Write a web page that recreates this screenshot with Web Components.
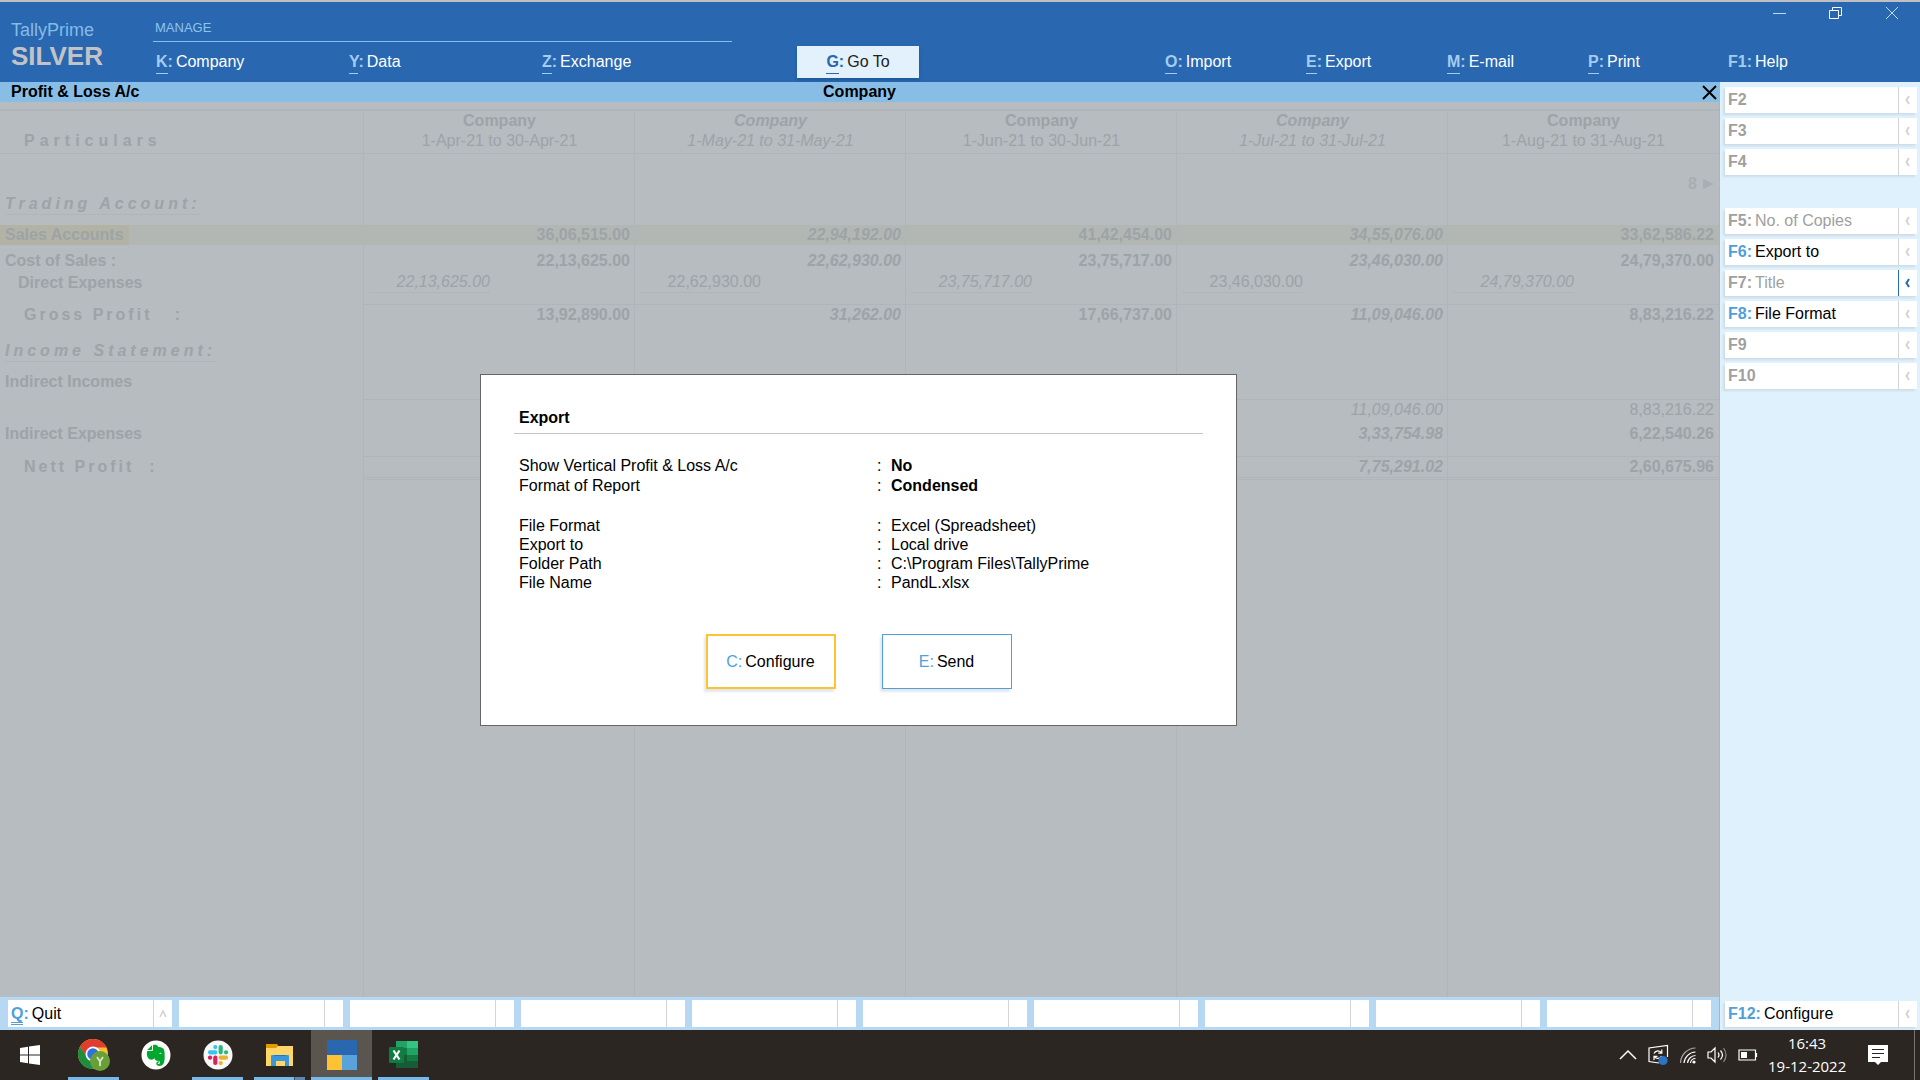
<!DOCTYPE html>
<html lang="en">
<head>
<meta charset="utf-8">
<title>TallyPrime - Profit &amp; Loss A/c</title>
<style>
  html, body { height: 100%; }
  body {
    margin: 0;
    font: 16px/20px "Liberation Sans", Arial, sans-serif;
    color: #000;
    background: #b6bcc0;
  }
</style>
</head>
<body>
<tally-app></tally-app>

<script>
  const BASE_STYLE = `
    *, *::before, *::after { box-sizing: border-box; }
    button { font: inherit; color: inherit; background: none; border: 0; padding: 0; margin: 0; text-align: left; }
    svg { display: block; }
  `;

  class BaseElement extends HTMLElement {
    constructor() {
      super();
      this.attachShadow({ mode: 'open' });
    }

    connectedCallback() {
      this.shadowRoot.innerHTML = `<style>${BASE_STYLE}${this.styles()}</style>${this.markup()}`;
    }

    attr(name) {
      return this.getAttribute(name) || '';
    }
  }

  /* ---------- Top menu ---------- */

  class MenuKey extends BaseElement {
    styles() {
      return `
        :host { display: block; --key: #a3cdf0; color: #fff; }
        :host([raised]) { --key: #2967b1; color: #222; background: #e2f1fc; box-shadow: 0 2px 3px #1d559a; }
        button { display: block; width: 100%; height: 32px; line-height: 30px; white-space: nowrap; }
        :host([raised]) button { text-align: center; }
        b { color: var(--key); margin-right: 3px; }
        u { text-decoration: none; padding-bottom: 3px; border-bottom: 1px solid var(--key); }
        :host([plain]) u { border: 0; }
      `;
    }

    markup() {
      return `<button type="button"><b><u>${this.attr('key')}</u>:</b><slot></slot></button>`;
    }
  }
  customElements.define('menu-key', MenuKey);

  class TallyHeader extends BaseElement {
    styles() {
      return `
        :host { display: grid; grid-template-columns: 1fr 201px; height: 82px; background: #2967b1; border-top: 2px solid #c0c0c4; }
        .main { display: grid; grid-template-columns: 797fr 122px 800fr; align-items: end; padding-bottom: 4px; }
        .left { display: grid; grid-template-columns: 153px minmax(0, 579px); align-items: end; }
        .brand { padding: 0 0 6px 11px; }
        .brand span { display: block; font-size: 18px; line-height: 20px; color: #85bbe6; }
        .brand strong { display: block; font-size: 26px; line-height: 32px; color: #c3c3c6; }
        .manage h2 { margin: 0 0 4px; padding: 0 0 3px 2px; font-size: 13px; line-height: 20px; font-weight: 400; color: #8fc4ee; border-bottom: 1px solid #88bde6; }
        nav { display: grid; grid-template-columns: repeat(3, 1fr); }
        nav menu-key { padding-left: 3px; }
        .right { grid-template-columns: repeat(4, 141px); justify-content: end; }
        .right menu-key { padding-left: 10px; }
        .side { display: flex; flex-direction: column; justify-content: space-between; padding-bottom: 4px; }
        .side menu-key { padding-left: 9px; }
        .window { display: flex; justify-content: flex-end; gap: 34px; padding-right: 17px; }
        .window button { width: 22px; height: 22px; display: grid; place-items: center; color: #c0dcf5; }
      `;
    }

    markup() {
      return `
        <div class="main">
          <div class="left">
            <div class="brand"><span>TallyPrime</span><strong>SILVER</strong></div>
            <div class="manage">
              <h2>MANAGE</h2>
              <nav aria-label="Manage">
                <menu-key key="K">Company</menu-key>
                <menu-key key="Y">Data</menu-key>
                <menu-key key="Z">Exchange</menu-key>
              </nav>
            </div>
          </div>
          <menu-key key="G" raised>Go To</menu-key>
          <nav class="right" aria-label="Share">
            <menu-key key="O">Import</menu-key>
            <menu-key key="E">Export</menu-key>
            <menu-key key="M">E-mail</menu-key>
            <menu-key key="P">Print</menu-key>
          </nav>
        </div>
        <div class="side">
          <div class="window">
            <button type="button" aria-label="Minimise"><svg width="14" height="14" stroke="currentColor"><path d="M0 7.500h13"/></svg></button>
            <button type="button" aria-label="Restore"><svg width="14" height="14" fill="none" stroke="#fff"><path d="M.5 4.500h9v8h-9zM3.500 4V1.500h9v8H10"/></svg></button>
            <button type="button" aria-label="Close"><svg width="14" height="14" stroke="currentColor"><path d="M1 1l12 12M13 1L1 13"/></svg></button>
          </div>
          <menu-key key="F1" plain>Help</menu-key>
        </div>
      `;
    }
  }
  customElements.define('tally-header', TallyHeader);

  /* ---------- Report ---------- */

  const COLUMNS = [
    '1-Apr-21 to 30-Apr-21',
    '1-May-21 to 31-May-21',
    '1-Jun-21 to 30-Jun-21',
    '1-Jul-21 to 31-Jul-21',
    '1-Aug-21 to 31-Aug-21'
  ];

  const MORE_ARROW = '<svg width="11" height="10" fill="currentColor"><path d="M0 0l11 5-11 5z"/></svg>';

  // kind: row class, h: row height, values: one per column
  const ROWS = [
    { kind: 'pager', h: 40, values: ['', '', '', '', `8${MORE_ARROW}`] },
    { kind: 'section', h: 21, name: 'Trading Account:' },
    { kind: 'gap', h: 10 },
    { kind: 'total current', h: 20, name: 'Sales Accounts', values: ['36,06,515.00', '22,94,192.00', '41,42,454.00', '34,55,076.00', '33,62,586.22'] },
    { kind: 'total', h: 26, name: 'Cost of Sales :', values: ['22,13,625.00', '22,62,930.00', '23,75,717.00', '23,46,030.00', '24,79,370.00'] },
    { kind: 'sub', h: 22, name: 'Direct Expenses', values: ['22,13,625.00', '22,62,930.00', '23,75,717.00', '23,46,030.00', '24,79,370.00'] },
    { kind: 'gap', h: 11 },
    { kind: 'total result ruled', h: 21, name: 'Gross Profit &nbsp;&nbsp;:', values: ['13,92,890.00', '31,262.00', '17,66,737.00', '11,09,046.00', '8,83,216.22'] },
    { kind: 'section', h: 37, name: 'Income Statement:' },
    { kind: 'total', h: 30, name: 'Indirect Incomes' },
    { kind: 'gap', h: 7 },
    { kind: 'ruled', h: 21, values: ['', '', '', '11,09,046.00', '8,83,216.22'] },
    { kind: 'total', h: 24, name: 'Indirect Expenses', values: ['', '', '', '3,33,754.98', '6,22,540.26'] },
    { kind: 'gap', h: 12 },
    { kind: 'total result ruled', h: 21, name: 'Nett Profit &nbsp;:', values: ['', '', '', '7,75,291.02', '2,60,675.96'] },
    { kind: 'double', h: 3 }
  ];

  class TallyReport extends BaseElement {
    styles() {
      return `
        :host { display: flex; flex-direction: column; min-width: 0; }
        .title { display: grid; grid-template-columns: 1fr auto 1fr; height: 20px; line-height: 19px; background: #88bde6; font-weight: 700; }
        .title h1 { margin: 0; padding-left: 11px; font-size: 16px; line-height: 19px; }
        .title button { justify-self: end; align-self: center; padding: 1px 2px 0 0; }
        .body { position: relative; flex: 1; padding-top: 7px; color: #9da3a7; --line: #afb5b9; }
        table { width: 100%; height: 100%; table-layout: fixed; border-collapse: separate; border-spacing: 0; }
        col:first-child { width: 364px; }
        th, td { padding: 0 4px; text-align: right; vertical-align: bottom; font-weight: 400; white-space: nowrap; border-right: 1px solid var(--line); }
        tr > :last-child { padding-right: 5px; border-right: 0; }
        th { padding-left: 5px; text-align: left; }
        thead th { height: 45px; padding-bottom: 2px; border-top: 2px solid var(--line); border-bottom: 1px solid var(--line); text-align: center; }
        thead th:first-child { padding-left: 24px; text-align: left; font-weight: 700; letter-spacing: 5px; }
        thead strong { display: block; }
        thead th:nth-child(odd) { font-style: italic; }
        thead th:first-child { font-style: normal; }
        .total th, .total td, .pager td { font-weight: 700; }
        .total td:nth-child(odd), .ruled td:nth-child(odd) { font-style: italic; }
        .pager td { color: #a8aeb2; }
        .pager svg { display: inline-block; margin-left: 6px; }
        .section span { display: inline-block; vertical-align: bottom; font-weight: 700; font-style: italic; letter-spacing: 4px; border-bottom: 1px solid var(--line); }
        .current { background: #b3b7b3; }
        .current th span { display: inline-block; margin-left: -5px; padding: 0 5px; background: #b2b3a5; vertical-align: bottom; }
        .sub th { padding-left: 18px; font-weight: 700; }
        .sub td { padding-left: 5px; text-align: left; }
        .sub td span { display: inline-block; width: 121px; text-align: right; border-bottom: 1px solid var(--line); vertical-align: bottom; }
        .sub td:nth-child(even) { font-style: italic; }
        .result th { padding-left: 24px; letter-spacing: 3px; }
        .ruled td { border-top: 1px solid var(--line); }
        .double td { border-top: 1px solid var(--line); border-bottom: 1px solid var(--line); }
        .overlay { position: absolute; inset: 0; display: grid; place-items: center; padding-right: 2px; color: #000; }
      `;
    }

    row(row) {
      const values = row.values || COLUMNS.map(() => '');
      const name = row.name ? `<span>${row.name}</span>` : '';
      return `
        <tr class="${row.kind}" style="height:${row.h}px">
          <th scope="row">${name}</th>
          ${values.map(v => `<td>${v ? `<span>${v}</span>` : ''}</td>`).join('')}
        </tr>`;
    }

    markup() {
      return `
        <div class="title">
          <h1>Profit &amp; Loss A/c</h1>
          <span>Company</span>
          <button type="button" aria-label="Close report"><svg width="15" height="15" stroke="#000" stroke-width="2"><path d="M1 1l13 13M14 1L1 14"/></svg></button>
        </div>
        <div class="body">
          <table>
            <colgroup><col>${COLUMNS.map(() => '<col>').join('')}</colgroup>
            <thead>
              <tr>
                <th scope="col">Particulars</th>
                ${COLUMNS.map(c => `<th scope="col"><strong>Company</strong>${c}</th>`).join('')}
              </tr>
            </thead>
            <tbody>
              ${ROWS.map(r => this.row(r)).join('')}
              <tr class="fill"><th></th>${COLUMNS.map(() => '<td></td>').join('')}</tr>
            </tbody>
          </table>
          <div class="overlay"><slot></slot></div>
        </div>
      `;
    }
  }
  customElements.define('tally-report', TallyReport);

  /* ---------- Export dialog ---------- */

  class DialogField extends BaseElement {
    styles() {
      return `
        :host { display: grid; grid-template-columns: 358px 14px 1fr; padding-left: 5px; line-height: 19px; }
        :host([strong]) { line-height: 20px; }
        :host([strong]) slot { font-weight: 700; }
      `;
    }

    markup() {
      return `<span>${this.attr('label')}</span><span>:</span><slot></slot>`;
    }
  }
  customElements.define('dialog-field', DialogField);

  class DialogButton extends BaseElement {
    styles() {
      return `
        :host { display: block; }
        button { width: 130px; height: 55px; padding-top: 1px; text-align: center; background: #fff; border: 1px solid #4f9fda; box-shadow: -2px 3px 2px #e4e8ec; }
        :host([selected]) button { border: 2px solid #ffc233; }
        span { color: #4f9fda; margin-right: 3px; }
      `;
    }

    markup() {
      return `<button type="button"><span>${this.attr('key')}:</span><slot></slot></button>`;
    }
  }
  customElements.define('dialog-button', DialogButton);

  class ExportDialog extends BaseElement {
    styles() {
      return `
        :host { display: block; width: 757px; padding: 33px 33px 36px; background: #fff; border: 1px solid #666; }
        h2 { margin: 0 0 22px; padding: 0 0 5px 5px; font-size: 16px; line-height: 20px; border-bottom: 1px solid #c4c4c4; }
        .group { margin-bottom: 20px; }
        .actions { display: flex; justify-content: center; gap: 46px; margin-top: 42px; }
      `;
    }

    markup() {
      return `
        <section role="dialog" aria-labelledby="title">
          <h2 id="title">Export</h2>
          <div class="group">
            <dialog-field label="Show Vertical Profit &amp;amp; Loss A/c" strong>No</dialog-field>
            <dialog-field label="Format of Report" strong>Condensed</dialog-field>
          </div>
          <dialog-field label="File Format">Excel (Spreadsheet)</dialog-field>
          <dialog-field label="Export to">Local drive</dialog-field>
          <dialog-field label="Folder Path">C:\\Program Files\\TallyPrime</dialog-field>
          <dialog-field label="File Name">PandL.xlsx</dialog-field>
          <div class="actions">
            <dialog-button key="C" selected>Configure</dialog-button>
            <dialog-button key="E">Send</dialog-button>
          </div>
        </section>
      `;
    }
  }
  customElements.define('export-dialog', ExportDialog);

  /* ---------- Side and bottom button bars ---------- */

  class SideButton extends BaseElement {
    styles() {
      return `
        :host { display: block; color: #a0a0a0; --key: #a0a0a0; --mark: #d4d4d4; }
        :host([active]) { color: #000; --key: #4f9fda; }
        :host([more]) { --mark: #2967b1; }
        button { display: grid; grid-template-columns: 1fr 19px; width: 100%; height: 26px; line-height: 25px; background: #fff; box-shadow: -2px 2px 2px #cddde8; }
        .text { padding-left: 3px; white-space: nowrap; }
        b { color: var(--key); margin-right: 3px; }
        i { display: grid; place-items: center; border-left: 1px solid var(--mark); color: var(--mark); }
      `;
    }

    markup() {
      const colon = this.textContent.trim() ? ':' : '';
      return `
        <button type="button">
          <span class="text"><b>${this.attr('key')}${colon}</b><slot></slot></span>
          <i><svg width="6" height="10" fill="none" stroke="currentColor" stroke-width="2"><path d="M4 1L1.500 5 4 9"/></svg></i>
        </button>`;
    }
  }
  customElements.define('side-button', SideButton);

  class SideBar extends BaseElement {
    styles() {
      return `
        :host { display: flex; flex-direction: column; gap: 5px; padding: 5px 3px 3px 5px; background: #dff1fd; border-left: 1px solid #88bde6; }
        .gap { height: 23px; }
        .push { flex: 1; }
      `;
    }

    markup() {
      return `
        <side-button key="F2"></side-button>
        <side-button key="F3"></side-button>
        <side-button key="F4"></side-button>
        <div class="gap"></div>
        <side-button key="F5">No. of Copies</side-button>
        <side-button key="F6" active>Export to</side-button>
        <side-button key="F7" more>Title</side-button>
        <side-button key="F8" active>File Format</side-button>
        <side-button key="F9"></side-button>
        <side-button key="F10"></side-button>
        <div class="push"></div>
        <side-button key="F12" active>Configure</side-button>
      `;
    }
  }
  customElements.define('side-bar', SideBar);

  class BottomBar extends BaseElement {
    styles() {
      return `
        :host { display: grid; grid-template-columns: repeat(10, 1fr); gap: 7px; padding: 3px 8px; background: #b7d8f2; }
        button { display: grid; grid-template-columns: 1fr 19px; height: 27px; line-height: 27px; background: #fff; }
        button:first-child { box-shadow: -2px 2px 2px #94b5d0; }
        .text { padding-left: 3px; }
        .text b { color: #4f9fda; margin-right: 3px; }
        u { text-decoration: none; border-bottom: 3px double #4f9fda; }
        i { display: grid; place-items: center; border-left: 1px solid #d4d4d4; }
      `;
    }

    markup() {
      const empty = '<button type="button" aria-label="Unassigned"><span></span><i></i></button>';
      return `
        <button type="button">
          <span class="text"><b><u>Q</u>:</b>Quit</span>
          <i><svg width="8" height="8" fill="none" stroke="#d0d0d0" stroke-width="1.500"><path d="M1 7l3-6 3 6"/></svg></i>
        </button>
        ${empty.repeat(9)}
      `;
    }
  }
  customElements.define('bottom-bar', BottomBar);

  /* ---------- Windows taskbar ---------- */

  const ICONS = {
    chrome: `<svg width="34" height="34" viewBox="0 0 34 34">
      <circle cx="16" cy="16" r="15" fill="#fbc02d"/>
      <path d="M3 8.500A15 15 0 0 1 29 8.500L30 9.500H16L9.500 19.700z" fill="#e33b2e"/>
      <path d="M3 8.500A15 15 0 0 0 16 31l6-11.500H10z" fill="#1e8e3e"/>
      <circle cx="16" cy="16" r="7.500" fill="#fff"/><circle cx="16" cy="16" r="5.800" fill="#2f6fe0"/>
      <circle cx="23" cy="23" r="10" fill="#689f38"/>
      <path d="M20 19l3 4.500 3-4.500M23 23.500v4.500" fill="none" stroke="#d7e8c4" stroke-width="1.800"/></svg>`,
    evernote: `<svg width="30" height="30" viewBox="0 0 30 30">
      <circle cx="15" cy="15" r="14.500" fill="#fff"/>
      <path d="M12 5v4.500c0 1-.5 1.500-1.500 1.500H6.300c-1.200 3 .2 7.500 2.200 8.300 2 .6 4 .5 5-1.300.3 2.500 1.500 2.700 4.300 3 1.700.2 1.700 3-.3 3-1.300 0-1-1.600.5-1.600v-1.200c-3.500-.3-3.800 4.800.4 4.800 4.600 0 5.300-4.500 5.300-9.500 0-4-.3-7-1.200-7.800C21.300 7.500 18.500 7 17 6.800 16.500 4.500 14 4.500 12 5z" fill="#00a82d"/>
      <path d="M11 5.300L6.200 10H10c.7 0 1-.4 1-1z" fill="#00a82d"/>
      <path d="M18 13.500c.8-1.200 2.400-1 2.500.6-.8-.4-1.600-.5-2.500-.6z" fill="#fff"/></svg>`,
    slack: `<svg width="30" height="30" viewBox="0 0 30 30">
      <circle cx="15" cy="15" r="14.500" fill="#f7f7f7"/>
      <g stroke-width="4.200" stroke-linecap="round">
      <path d="M12.300 7v.1M7 12.300h5.300" stroke="#36c5f0"/>
      <path d="M17.700 7v5.300M23 12.300h.1" stroke="#2eb67d"/>
      <path d="M17.700 17.700H23M17.700 23v.1" stroke="#ecb22e"/>
      <path d="M12.300 17.700V23M7 17.700h.1" stroke="#e01e5a"/></g></svg>`,
    explorer: `<svg width="28" height="24" viewBox="0 0 28 24">
      <path d="M0 1h11l2 3v4H0z" fill="#e19a00"/>
      <path d="M0 5h10l2-2h15v20H0z" fill="#ffd667"/>
      <path d="M5 13q0-1 1-1h16q1 0 1 1v10h-4v-5h-9v5H5z" fill="#3a96dd"/>
      <path d="M8 12h12v1H8z" fill="#1979ca"/></svg>`,
    tally: `<svg width="30" height="30"><path d="M0 0h30v15H0z" fill="#2967b1"/><path d="M0 15h15v15H0z" fill="#ffc233"/><path d="M15 15h15v15H15z" fill="#5aa2dc"/></svg>`,
    excel: `<svg width="30" height="28" viewBox="0 0 30 28">
      <path d="M7 0h11v7H7z" fill="#21a366"/><path d="M18 0h11v7H18z" fill="#33c481"/>
      <path d="M7 7h11v7H7z" fill="#107c41"/><path d="M18 7h11v7H18z" fill="#21a366"/>
      <path d="M7 14h11v6H7z" fill="#185c37"/><path d="M18 14h11v6H18z" fill="#107c41"/>
      <path d="M7 20h22v7H7z" fill="#185c37"/>
      <rect y="6" width="15" height="16" rx="1" fill="#107c41"/>
      <path d="M4.500 9.500l6 9M10.500 9.500l-6 9" stroke="#fff" stroke-width="2.200"/></svg>`
  };

  class TaskTile extends BaseElement {
    styles() {
      return `
        :host { display: block; height: 50px; }
        :host([active]) { background: #5b5550; }
        button { display: grid; grid-template-rows: 1fr 3px; justify-items: center; align-items: center; width: 61px; height: 50px; padding-top: 3px; }
        .bar { width: 51px; height: 3px; }
        :host([open]) .bar { background: #76b9ed; }
        :host([active]) .bar { width: 61px; background: #76b9ed; }
        :host([stacked]) .bar { background: linear-gradient(90deg, #76b9ed 40px, #3c5266 40px 41px, #5689b3 41px); }
      `;
    }

    markup() {
      return `<button type="button" aria-label="${this.attr('icon')}">${ICONS[this.attr('icon')]}<span class="bar"></span></button>`;
    }
  }
  customElements.define('task-tile', TaskTile);

  class WinTaskbar extends BaseElement {
    styles() {
      return `
        :host { display: flex; height: 50px; background: #2c2622; color: #fff; }
        .start { display: grid; place-items: center; width: 60px; margin-right: 3px; }
        .tiles { display: flex; gap: 1px; flex: 1; }
        .tray { display: flex; align-items: center; gap: 10px; }
        .tray button { display: block; }
        .clock { width: 78px; font: 15px/23px "Open Sans", "Noto Sans", sans-serif; text-align: center; white-space: nowrap; }
        .note { margin: 0 15px 0 11px; }
        .peek { width: 6px; height: 50px; border-left: 1px solid #77736f; }
      `;
    }

    markup() {
      return `
        <button class="start" type="button" aria-label="Start">
          <svg width="20" height="20" fill="#fff"><path d="M0 3l8-1.200V9.500H0zM9 1.600L20 0v9.500H9zM0 10.500h8v7.700L0 17zM9 10.500h11V20L9 18.400z"/></svg>
        </button>
        <div class="tiles">
          <task-tile icon="chrome" open></task-tile>
          <task-tile icon="evernote"></task-tile>
          <task-tile icon="slack" open></task-tile>
          <task-tile icon="explorer" open stacked></task-tile>
          <task-tile icon="tally" active></task-tile>
          <task-tile icon="excel" open></task-tile>
        </div>
        <div class="tray">
          <button type="button" aria-label="Hidden icons"><svg width="18" height="12" fill="none" stroke="#fff" stroke-width="1.500"><path d="M1 10l8-8 8 8"/></svg></button>
          <button type="button" aria-label="Sync"><svg width="22" height="22" fill="none" stroke="#fff" stroke-width="1.200">
            <path d="M12 19l-10-1.500V4L20.500 1.500V13"/>
            <path d="M7 9.500c1.500-3.500 6-3.500 7.500-.5M14.800 5.500V9.200h-3.500M14.500 12c-1.500 3-5.500 3.200-7 .5M7 16v-3.600h3.500"/>
            <circle cx="16" cy="16.500" r="4.600" fill="#2b74c4" stroke="none"/></svg></button>
          <button type="button" aria-label="Wi-Fi"><svg width="18" height="18" fill="none" stroke="#fff" stroke-width="1.200">
            <path d="M1.500 17A15.500 15.500 0 0 1 16.500 2" stroke="#a8a5a2"/><path d="M5 17A12 12 0 0 1 16.500 6M8.500 17A8.500 8.500 0 0 1 16.500 9.500M11.500 17a5 5 0 0 1 5-4.500"/>
            <circle cx="15" cy="16" r="1.600" fill="#fff" stroke="none"/></svg></button>
          <button type="button" aria-label="Volume"><svg width="21" height="18" fill="none" stroke="#fff" stroke-width="1.200">
            <path d="M1 6h3l4-4v14l-4-4H1zM11 6.500q2 2.500 0 5M13.500 4.500q4 4.500 0 9"/><path d="M16.500 2q5 7 0 14" stroke="#8d8a87"/></svg></button>
          <button type="button" aria-label="Battery"><svg width="20" height="12" fill="none" stroke="#fff" stroke-width="1.200"><path d="M1 1h16.500v10H1zM18.500 4v4"/><path d="M3 3h6v6H3z" fill="#fff" stroke="none"/></svg></button>
          <div class="clock"><div>16:43</div><div>19-12-2022</div></div>
          <button class="note" type="button" aria-label="Notifications"><svg width="22" height="20"><path d="M1 0h20v17h-7l-3 3-3-3H1z" fill="#fff"/><path d="M5 4.500h12M5 8.500h12M5 12.500h8" stroke="#2c2622"/></svg></button>
          <div class="peek"></div>
        </div>
      `;
    }
  }
  customElements.define('win-taskbar', WinTaskbar);

  /* ---------- Page ---------- */

  class TallyApp extends BaseElement {
    styles() {
      return `
        :host { display: grid; grid-template-rows: auto 1fr auto auto; grid-template-columns: 1fr 201px; min-height: 100vh; }
        tally-header, win-taskbar { grid-column: 1 / -1; }
        side-bar { grid-column: 2; grid-row: 2 / 4; }
        tally-report { grid-column: 1; grid-row: 2; }
        bottom-bar { grid-column: 1; grid-row: 3; }
      `;
    }

    markup() {
      return `
        <tally-header></tally-header>
        <tally-report><export-dialog></export-dialog></tally-report>
        <bottom-bar></bottom-bar>
        <side-bar></side-bar>
        <win-taskbar></win-taskbar>
      `;
    }
  }
  customElements.define('tally-app', TallyApp);
</script>
</body>
</html>
